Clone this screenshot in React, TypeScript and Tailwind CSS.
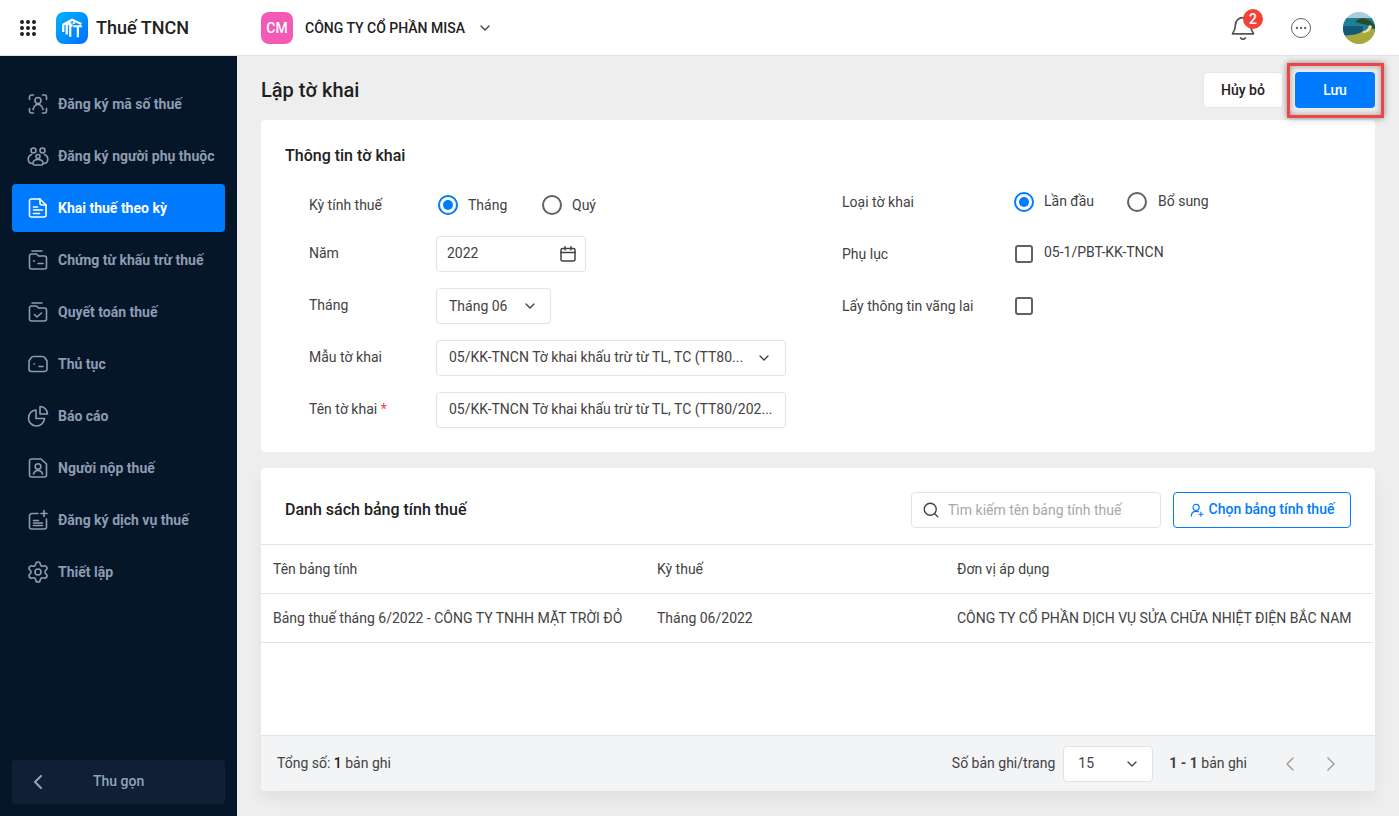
import React from "react";
import { Settings, Search, ChevronDown, ChevronLeft, ChevronRight, Ellipsis } from "lucide-react";

const S = ({ children, className = "w-6 h-6" }: { children: React.ReactNode; className?: string }) => (
  <svg viewBox="0 0 24 24" fill="none" stroke="currentColor" strokeWidth="1.6" strokeLinecap="round" strokeLinejoin="round" className={className}>
    {children}
  </svg>
);

const menu: { label: string; icon: React.ReactNode; active?: boolean }[] = [
  {
    label: "Đăng ký mã số thuế",
    icon: (
      <S>
        <path d="M3.5 7.500V5a2 2 0 0 1 2-2h2M16.500 3h2a2 2 0 0 1 2 2v2.500M3.5 16.500V19a2 2 0 0 0 2 2h2M16.500 21h2a2 2 0 0 0 2-2v-2.500" />
        <circle cx="12" cy="8.500" r="3" />
        <path d="M7 17.500c.8-3 2.700-5 5-5s4.200 2 5 5" />
      </S>
    ),
  },
  {
    label: "Đăng ký người phụ thuộc",
    icon: (
      <S>
        <circle cx="7.500" cy="6.500" r="2.500" />
        <circle cx="16.500" cy="6.500" r="2.500" />
        <circle cx="12" cy="12.500" r="2" />
        <path d="M5.500 10.500c-2 .8-3.300 2.500-3.300 4.800 0 2.500 1.800 4.200 4.300 4.200M18.500 10.500c2 .8 3.300 2.500 3.300 4.800 0 2.500-1.800 4.200-4.300 4.200M7 19.500c0-2.500 2-4 5-4s5 1.500 5 4c0 1-.6 1.500-1.500 1.500h-7C7.600 21 7 20.500 7 19.500Z" />
      </S>
    ),
  },
  {
    label: "Khai thuế theo kỳ",
    active: true,
    icon: (
      <S>
        <path d="M5.500 3H14l6 6v10a2 2 0 0 1-2 2H5.500a2 2 0 0 1-2-2V5a2 2 0 0 1 2-2Z" />
        <path d="M14 3v4a2 2 0 0 0 2 2h4M7.500 11h4M7.500 14h9M7.500 17.500h6" />
      </S>
    ),
  },
  {
    label: "Chứng từ khấu trừ thuế",
    icon: (
      <S>
        <path d="M6 3h10M3.500 19V8a2 2 0 0 1 2-2h5l2 2h6a2 2 0 0 1 2 2v9a2 2 0 0 1-2 2h-13a2 2 0 0 1-2-2Z" />
        <path d="M7.500 13h1M12 15.500h5" />
      </S>
    ),
  },
  {
    label: "Quyết toán thuế",
    icon: (
      <S>
        <path d="M6 3h10M3.500 19V8a2 2 0 0 1 2-2h5l2 2h6a2 2 0 0 1 2 2v9a2 2 0 0 1-2 2h-13a2 2 0 0 1-2-2Z" />
        <path d="m8.500 14.500 2.500 2.500 4.500-4" />
      </S>
    ),
  },
  {
    label: "Thủ tục",
    icon: (
      <S>
        <path d="M7.500 4.500h9a3 3 0 0 1 2.400 1.200L21 9v8a2.500 2.500 0 0 1-2.500 2.500h-13A2.500 2.500 0 0 1 3 17V9l2.100-3.300A3 3 0 0 1 7.500 4.500Z" />
        <path d="M8 12h.5M13 14.500h4" />
      </S>
    ),
  },
  {
    label: "Báo cáo",
    icon: (
      <S>
        <path d="M10 6a8 8 0 1 0 8.500 8.500H10V6Z" />
        <path d="M14 2.500a7.500 7.500 0 0 1 7.500 7.500H14V2.500Z" />
      </S>
    ),
  },
  {
    label: "Người nộp thuế",
    icon: (
      <S>
        <path d="M5.500 3H15l5.500 5v11a2 2 0 0 1-2 2h-13a2 2 0 0 1-2-2V5a2 2 0 0 1 2-2Z" />
        <circle cx="12" cy="10.500" r="2.800" />
        <path d="M7.500 18c.6-2.200 2.300-3.500 4.500-3.500s3.900 1.300 4.500 3.500" />
      </S>
    ),
  },
  {
    label: "Đăng ký dịch vụ thuế",
    icon: (
      <S>
        <path d="M12 5.500H6a2.500 2.500 0 0 0-2.500 2.500v11A2 2 0 0 0 5.500 21h13a2 2 0 0 0 2-2v-8" />
        <path d="M18 2.500v6M15 5.500h6M7.500 12.500h5M7.500 15h9M7.500 17.500h9" />
      </S>
    ),
  },
  { label: "Thiết lập", icon: <Settings className="w-6 h-6" strokeWidth={1.6} /> },
];

const Radio = ({ on }: { on?: boolean }) =>
  on ? (
    <span className="flex h-5 w-5 items-center justify-center rounded-full border-2 border-[#007aff]">
      <span className="h-2.5 w-2.5 rounded-full bg-[#007aff]" />
    </span>
  ) : (
    <span className="h-5 w-5 rounded-full border-2 border-[#616161]" />
  );

const Check = () => <span className="h-[18px] w-[18px] rounded-[3px] border-2 border-[#616161]" />;

const Field = ({ label, children, req }: { label: string; children: React.ReactNode; req?: boolean }) => (
  <div className="flex h-9 items-center">
    <div className="-mt-0.5 w-[127px] text-[#424242]">
      {label}
      {req && <span className="text-[#f44336]"> *</span>}
    </div>
    {children}
  </div>
);

const Box = ({ className, children }: { className: string; children: React.ReactNode }) => (
  <div className={`flex h-9 items-center rounded border border-[#e3e3e3] bg-white text-[#424242] ${className}`}>{children}</div>
);

export default function App() {
  return (
    <div className="relative flex h-[816px] w-[1399px] flex-col overflow-hidden bg-[#eeeeee] text-sm font-[Roboto,sans-serif] text-[#212121]">
      <header className="flex h-14 shrink-0 items-center border-b border-[#e0e0e0] bg-white">
        <div className="ml-5 grid w-4 grid-cols-3 gap-[2px]">
          {Array.from({ length: 9 }).map((_, i) => (
            <span key={i} className="h-1 w-1 rounded-full bg-[#212121]" />
          ))}
        </div>
        <div className="ml-5 flex h-8 w-8 items-center justify-center rounded-lg bg-gradient-to-br from-[#00b2ff] to-[#0a6cff]">
          <svg viewBox="0 0 24 24" fill="none" stroke="#fff" strokeWidth="1.900" className="h-7 w-7">
            <path d="M4 9.500 12 5l8 3.500M4.500 9.500v6M7.500 8v9.500M10.500 7v12.500M13.500 7v1.500M13 10.500h7.500M17 10.500V20M7.500 8l5 2" />
          </svg>
        </div>
        <div className="ml-2 w-[165px] text-lg font-medium text-[#212121]">Thuế TNCN</div>
        <div className="flex h-8 w-8 items-center justify-center rounded-lg bg-[#f25ab5] font-medium text-white">CM</div>
        <div className="ml-3 text-sm font-medium text-[#212121]">CÔNG TY CỔ PHẦN MISA</div>
        <ChevronDown className="ml-3 h-4 w-4 text-[#424242]" />
        <div className="relative ml-auto">
          <svg viewBox="0 0 24 24" fill="none" stroke="#555555" strokeWidth="1.500" strokeLinecap="round" strokeLinejoin="round" className="h-7 w-7">
            <path d="M12 3a6.500 6.500 0 0 0-6.500 6.500c0 5-2.500 7-2.500 7.500h18c0-.5-2.500-2.500-2.500-7.500A6.500 6.500 0 0 0 12 3Z" />
            <path d="M10 20.500c.5.700 1.200 1 2 1s1.500-.3 2-1" />
          </svg>
          <span className="absolute -right-1.5 top-[-5px] flex h-5 w-5 items-center justify-center rounded-full bg-[#f44336] text-sm font-medium text-white">2</span>
        </div>
        <div className="ml-[34px] flex h-5 w-5 items-center justify-center rounded-full border-[1.5px] border-[#616161]">
          <Ellipsis className="h-3.5 w-3.5 text-[#616161]" />
        </div>
        <div className="ml-[32px] mr-6 h-8 w-8 overflow-hidden rounded-full">
          <svg viewBox="0 0 32 32" className="h-8 w-8">
            <rect width="32" height="32" fill="#a9cdd6" />
            <rect y="6" width="32" height="18" fill="#1f7f97" />
            <rect y="14" width="20" height="9" fill="#105a78" />
            <path d="M12 10c3-3 8-5 11-3 3 1 6 3 9 6v4c-6-4-13-5-20-7Z" fill="#2f4a2b" />
            <path d="M0 32V24c8-1 15-1 20-5 4-2 8-2 12-2v15Z" fill="#a9a83a" />
            <path d="M19 20c4-1 6-3 7-7l3 1c-1 4-4 7-9 7Z" fill="#e6dfc4" />
          </svg>
        </div>
      </header>

      <div className="flex min-h-0 flex-1">
        <aside className="flex w-[237px] shrink-0 flex-col bg-[#041628] px-3 pb-3 pt-6">
          <nav className="flex flex-col gap-1">
            {menu.map((m) => (
              <div
                key={m.label}
                className={`flex h-12 items-center gap-2 whitespace-nowrap rounded pl-3.5 font-bold ${m.active ? "bg-[#007aff] text-white" : "text-[#8f9bb3]"}`}
              >
                {m.icon}
                <span>{m.label}</span>
              </div>
            ))}
          </nav>
          <div className="mt-auto flex h-11 items-center rounded bg-[#101f35] pl-3.5 font-medium text-[#8fa3bf]">
            <ChevronLeft className="h-6 w-6" strokeWidth={2} />
            <span className="-mt-0.5 ml-[43px]">Thu gọn</span>
          </div>
        </aside>

        <main className="flex min-w-0 flex-1 flex-col px-6 pt-4">
          <div className="flex h-9 items-center">
            <h1 className="text-xl font-medium text-[#212121]">Lập tờ khai</h1>
            <button className="ml-auto h-9 w-20 rounded border border-[#e6e6e6] bg-white font-medium text-[#212121]">Hủy bỏ</button>
            <button className="ml-3 h-9 w-20 rounded bg-[#007aff] font-medium text-white">Lưu</button>
          </div>

          <section className="mt-3 h-[332px] rounded bg-white px-6 pt-[26px]">
            <h2 className="flex h-5 items-center text-base font-medium">Thông tin tờ khai</h2>
            <div className="mt-[22px] flex">
              <div className="ml-6 flex w-[533px] flex-col gap-4">
                <div className="flex h-8 items-center pt-0.5">
                  <div className="w-[127px] text-[#424242]">Kỳ tính thuế</div>
                  <div className="ml-0.5 flex items-center gap-2.5 text-[#424242]">
                    <Radio on /> <span className="w-[44px]">Tháng</span>
                  </div>
                  <div className="ml-[30px] flex items-center gap-2.5 text-[#424242]">
                    <Radio /> <span>Quý</span>
                  </div>
                </div>
                <Field label="Năm">
                  <Box className="w-[150px] justify-between pl-2.5 pr-2">
                    <span className="-mt-0.5">2022</span>
                    <svg viewBox="0 0 18 18" fill="none" stroke="#424242" strokeWidth="1.500" strokeLinecap="round" className="h-[18px] w-[18px]">
                      <rect x="2" y="3.500" width="14" height="12.500" rx="1.500" />
                      <path d="M2 7.500h14M6 1.800v3M12 1.800v3" />
                    </svg>
                  </Box>
                </Field>
                <Field label="Tháng">
                  <Box className="w-[115px] justify-between pl-3 pr-3">
                    <span>Tháng 06</span>
                    <ChevronDown className="h-4 w-4 text-[#424242]" />
                  </Box>
                </Field>
                <Field label="Mẫu tờ khai">
                  <Box className="w-[350px] justify-between pl-3 pr-[13px]">
                    <span className="-mt-0.5 text-[#424242]">05/KK-TNCN Tờ khai khấu trừ từ TL, TC (TT80...</span>
                    <ChevronDown className="h-4 w-4 text-[#424242]" />
                  </Box>
                </Field>
                <Field label="Tên tờ khai" req>
                  <Box className="w-[350px] pl-3">
                    <span className="-mt-0.5">05/KK-TNCN Tờ khai khấu trừ từ TL, TC (TT80/202...</span>
                  </Box>
                </Field>
              </div>
              <div className="-mt-0.5 flex flex-col text-[#424242]">
                <div className="flex h-8 items-center">
                  <div className="w-[172px]">Loại tờ khai</div>
                  <div className="flex items-center gap-2.5"><Radio on /> <span className="-mt-0.5 w-[54px]">Lần đầu</span></div>
                  <div className="ml-[29px] flex items-center gap-[11px]"><Radio /> <span className="-mt-0.5">Bổ sung</span></div>
                </div>
                <div className="mt-5 flex h-8 items-center">
                  <div className="w-[173px]">Phụ lục</div>
                  <Check />
                  <span className="-mt-1 ml-[11px]">05-1/PBT-KK-TNCN</span>
                </div>
                <div className="mt-5 flex h-8 items-center">
                  <div className="w-[173px]">Lấy thông tin vãng lai</div>
                  <Check />
                </div>
              </div>
            </div>
          </section>

          <section className="mt-4 flex h-[323px] flex-col overflow-hidden rounded bg-white shadow-[0_8px_16px_rgba(0,0,0,0.06)]">
            <div className="flex h-[76px] shrink-0 items-center px-6 pb-0 pt-[8px]">
              <h2 className="text-base font-medium">Danh sách bảng tính thuế</h2>
              <div className="ml-auto flex h-9 w-[250px] items-center gap-2 rounded border border-[#e3e3e3] pl-2.5">
                <Search className="h-[18px] w-[18px] text-[#424242]" strokeWidth={1.800} />
                <span className="text-[#a8a8a8]">Tìm kiếm tên bảng tính thuế</span>
              </div>
              <button className="ml-3 flex h-9 w-[178px] items-center justify-center gap-[5px] rounded border border-[#007aff] font-medium text-[#007aff]">
                <svg viewBox="0 0 16 16" fill="none" stroke="currentColor" strokeWidth="1.300" strokeLinecap="round" className="h-3.5 w-3.5">
                  <circle cx="7" cy="5" r="3.500" />
                  <path d="M1.500 15c0-3.500 2.300-5.500 5.500-5.500 1 0 1.900.2 2.700.6M12.500 10.500v4.500M10.200 12.800h4.600" />
                </svg>
                <span className="-mt-0.5">Chọn bảng tính thuế</span>
              </button>
            </div>
            <div className="mr-0.5 flex h-[50px] shrink-0 items-center border-y border-[#e3e3e3] text-[#424242]">
              <div className="w-[396px] pl-3">Tên bảng tính</div>
              <div className="w-[300px]">Kỳ thuế</div>
              <div>Đơn vị áp dụng</div>
            </div>
            <div className="mr-0.5 flex h-[49px] shrink-0 items-center border-b border-[#e3e3e3] text-[#424242]">
              <div className="w-[396px] pl-3">Bảng thuế tháng 6/2022 - CÔNG TY TNHH MẶT TRỜI ĐỎ</div>
              <div className="w-[300px]">Tháng 06/2022</div>
              <div>CÔNG TY CỔ PHẦN DỊCH VỤ SỬA CHỮA NHIỆT ĐIỆN BẮC NAM</div>
            </div>
            <div className="flex-1" />
            <div className="flex h-14 shrink-0 items-center border-t border-[#e3e3e3] bg-[#f3f4f6] pl-4 text-[#424242]">
              <div className="-mt-0.5">Tổng số: <b className="font-medium text-[#212121]">1</b> bản ghi</div>
              <div className="-mt-0.5 ml-auto">Số bản ghi/trang</div>
              <Box className="ml-2 w-[90px] justify-between pl-3.5 pr-3">
                <span className="-mt-0.5">15</span>
                <ChevronDown className="h-4 w-4 text-[#424242]" />
              </Box>
              <div className="-mt-0.5 ml-4"><b className="font-bold text-[#424242]">1 - 1</b> bản ghi</div>
              <ChevronLeft className="ml-[31px] h-6 w-6 text-[#a0a0a0]" strokeWidth={1.500} />
              <ChevronRight className="ml-[17px] mr-[32px] h-6 w-6 text-[#a0a0a0]" strokeWidth={1.500} />
            </div>
          </section>
        </main>
      </div>

      <div className="absolute left-[1287px] top-[63px] h-[55px] w-[97px] border-[3px] border-[#f04545] shadow-[0_0_6px_rgba(0,0,0,0.45),inset_0_0_6px_rgba(0,0,0,0.35)]" />
    </div>
  );
}
